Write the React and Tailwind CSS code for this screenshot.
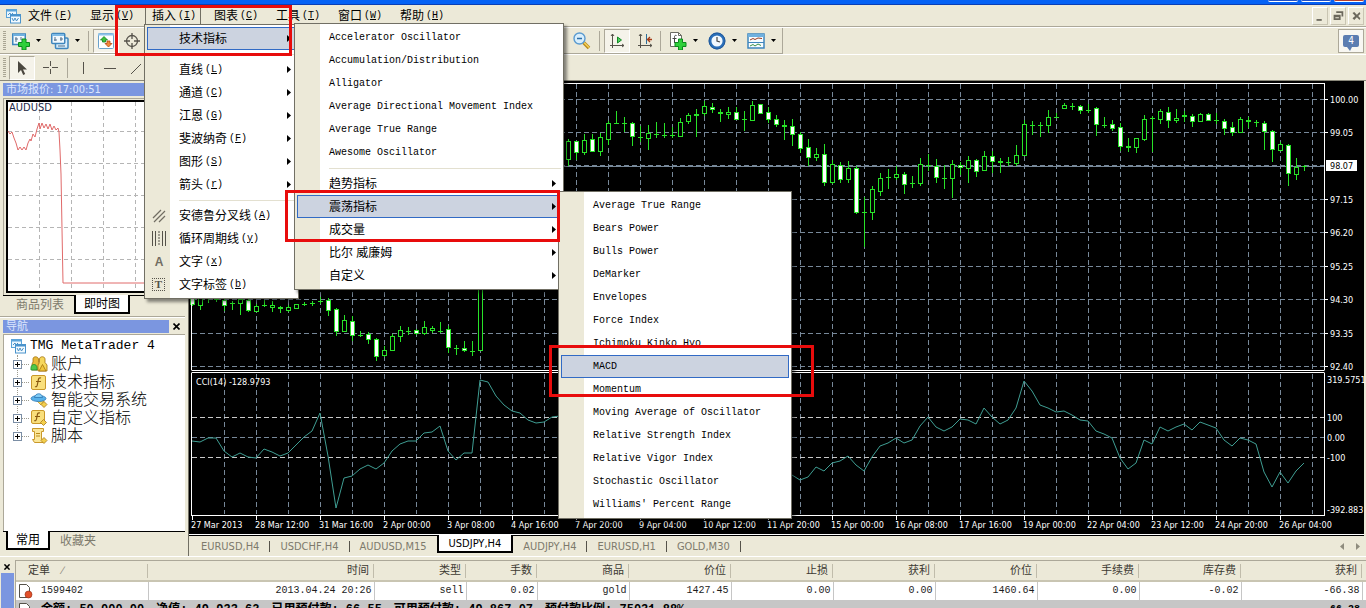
import React from "react";

const CJK = "font-['Liberation_Sans','Noto_Sans_CJK_SC',sans-serif]";
const MONO = "font-['Liberation_Mono','Noto_Sans_CJK_SC',monospace]";
const TAHOMA = "font-['DejaVu_Sans_Condensed','Noto_Sans_CJK_SC',sans-serif]";

/* ------------------------------ data ------------------------------ */

const menuBar = [
  ["文件", "F"],
  ["显示", "V"],
  ["插入", "I"],
  ["图表", "C"],
  ["工具", "T"],
  ["窗口", "W"],
  ["帮助", "H"],
];

const insertMenu = [
  { label: "技术指标", sub: true, active: true },
  null,
  { label: "直线", key: "L", sub: true },
  { label: "通道", key: "C", sub: true },
  { label: "江恩", key: "G", sub: true },
  { label: "斐波纳奇", key: "F", sub: true },
  { label: "图形", key: "S", sub: true },
  { label: "箭头", key: "r", sub: true },
  null,
  { label: "安德鲁分叉线", key: "A", icon: "fork" },
  { label: "循环周期线", key: "y", icon: "cycle" },
  { label: "文字", key: "x", icon: "text" },
  { label: "文字标签", key: "b", icon: "label" },
];

const indicatorMenu = [
  { label: "Accelerator Oscillator", latin: true },
  { label: "Accumulation/Distribution", latin: true },
  { label: "Alligator", latin: true },
  { label: "Average Directional Movement Index", latin: true },
  { label: "Average True Range", latin: true },
  { label: "Awesome Oscillator", latin: true },
  null,
  { label: "趋势指标", sub: true },
  { label: "震荡指标", sub: true, active: true },
  { label: "成交量", sub: true },
  { label: "比尔 威廉姆", sub: true },
  { label: "自定义", sub: true },
];

const oscillatorMenu = [
  "Average True Range",
  "Bears Power",
  "Bulls Power",
  "DeMarker",
  "Envelopes",
  "Force Index",
  "Ichimoku Kinko Hyo",
  "MACD",
  "Momentum",
  "Moving Average of Oscillator",
  "Relative Strength Index",
  "Relative Vigor Index",
  "Stochastic Oscillator",
  "Williams' Percent Range",
].map((label) => ({ label, latin: true, active: label === "MACD" }));

const chartTabs = ["EURUSD,H4", "USDCHF,H4", "AUDUSD,M15", "USDJPY,H4", "AUDJPY,H4", "EURUSD,H1", "GOLD,M30"];

const priceLabels = [
  ["100.00", 100],
  ["99.05", 133],
  ["97.15", 200],
  ["96.20", 233],
  ["95.25", 267],
  ["94.30", 300],
  ["93.35", 334],
  ["92.40", 367],
];

const cciLabels = [
  ["319.5751", 380],
  ["100", 418],
  ["0.00", 438],
  ["-100", 458],
  ["-392.883", 510],
];

const timeLabels = [
  "27 Mar 2013", "28 Mar 12:00", "31 Mar 16:00", "2 Apr 00:00", "3 Apr 08:00", "4 Apr 16:00",
  "7 Apr 20:00", "9 Apr 04:00", "10 Apr 12:00", "11 Apr 20:00", "15 Apr 00:00", "16 Apr 08:00",
  "17 Apr 16:00", "19 Apr 00:00", "22 Apr 04:00", "23 Apr 12:00", "24 Apr 20:00", "26 Apr 04:00",
];

// kind (h hollow, f filled, d doji), high, low, body top, body bottom - in thirds of a pixel
const leftBars = [
  ["f", 55, 80, 58, 76], ["h", 50, 93, 55, 77], ["d", 50, 72, 55], ["d", 50, 68, 60],
  ["f", 60, 96, 64, 77], ["d", 66, 94, 72], ["h", 58, 108, 61, 73], ["f", 58, 98, 63, 92],
  ["h", 74, 98, 82, 95], ["d", 62, 85, 79], ["h", 65, 98, 78, 84], ["h", 80, 103, 84, 88],
  ["h", 78, 98, 85, 92], ["h", 75, 90, 76, 86], ["d", 68, 82, 75], ["d", 66, 80, 71],
  ["d", 55, 75, 66], ["f", 56, 112, 64, 92], ["f", 88, 170, 91, 155], ["h", 108, 160, 124, 155],
  ["f", 112, 185, 125, 168], ["d", 157, 175, 167], ["f", 160, 195, 165, 181], ["f", 176, 245, 180, 230],
  ["h", 200, 235, 213, 227], ["h", 165, 216, 172, 214], ["h", 142, 190, 154, 172], ["d", 145, 168, 155],
  ["f", 150, 168, 154, 162], ["h", 126, 167, 145, 163], ["h", 140, 162, 148, 153], ["d", 130, 162, 155],
  ["f", 140, 222, 151, 205], ["d", 197, 228, 206], ["f", 186, 218, 208, 213], ["d", 186, 230, 215],
  ["h", 0, 214, 0, 214],
];

const rightBars = [
  ["h", 420, 500, 427, 479], ["f", 427, 482, 427, 458], ["h", 405, 468, 423, 458], ["f", 405, 460, 421, 455],
  ["h", 402, 470, 415, 455], ["h", 367, 438, 373, 419], ["d", 337, 376, 373], ["d", 355, 399, 373],
  ["f", 369, 440, 371, 412], ["d", 382, 430, 413], ["h", 378, 452, 402, 416], ["d", 368, 416, 405],
  ["d", 373, 416, 407], ["d", 385, 416, 407], ["h", 358, 412, 370, 412], ["h", 342, 374, 349, 367],
  ["h", 330, 413, 345, 349], ["h", 306, 350, 320, 342], ["f", 312, 342, 324, 331], ["h", 330, 368, 339, 343],
  ["h", 323, 360, 340, 345], ["f", 325, 362, 340, 359], ["d", 336, 396, 361], ["h", 306, 362, 318, 362],
  ["f", 315, 345, 315, 342], ["f", 325, 372, 340, 359], ["f", 348, 384, 361, 376], ["h", 362, 422, 377, 381],
  ["f", 361, 440, 381, 405], ["f", 400, 462, 404, 446], ["f", 420, 502, 445, 473], ["h", 447, 486, 466, 475],
  ["f", 436, 560, 465, 548], ["h", 482, 554, 495, 548], ["f", 490, 552, 497, 540], ["h", 485, 552, 507, 541],
  ["f", 502, 644, 507, 640], ["d", 595, 745, 639], ["h", 560, 662, 570, 638], ["h", 522, 590, 538, 575],
  ["d", 511, 570, 534], ["h", 500, 543, 526, 535], ["f", 520, 585, 526, 556], ["d", 532, 566, 553],
  ["h", 478, 560, 495, 551], ["d", 465, 515, 498], ["f", 480, 553, 500, 533], ["d", 498, 570, 537],
  ["h", 483, 596, 495, 538], ["f", 490, 527, 497, 504], ["h", 472, 552, 484, 506], ["f", 480, 533, 482, 515],
  ["h", 457, 515, 472, 513], ["f", 457, 522, 472, 485], ["h", 478, 522, 485, 490], ["d", 474, 500, 490],
  ["h", 437, 500, 468, 491], ["h", 362, 470, 376, 467], ["d", 365, 408, 377], ["d", 370, 414, 377],
  ["h", 333, 401, 354, 377], ["d", 342, 358, 353], ["h", 312, 330, 319, 326], ["d", 312, 332, 322],
  ["f", 318, 345, 322, 332], ["d", 315, 342, 333], ["f", 323, 410, 328, 376], ["d", 355, 387, 379],
  ["f", 363, 395, 376, 386], ["f", 373, 455, 385, 440], ["h", 417, 458, 440, 444], ["h", 417, 461, 418, 443],
  ["h", 348, 425, 361, 419], ["d", 352, 458, 358], ["h", 331, 375, 337, 359], ["f", 324, 386, 340, 362],
  ["h", 330, 372, 357, 362], ["h", 337, 368, 347, 352], ["f", 345, 383, 350, 365], ["h", 342, 368, 346, 365],
  ["f", 342, 367, 346, 362], ["d", 342, 374, 363], ["f", 360, 407, 367, 387], ["f", 370, 411, 385, 398],
  ["h", 355, 402, 361, 399], ["h", 353, 386, 362, 367], ["d", 363, 384, 369], ["f", 366, 453, 373, 395],
  ["f", 393, 488, 395, 449], ["h", 428, 456, 436, 452], ["f", 435, 560, 439, 521], ["h", 477, 542, 503, 524],
  ["d", 499, 515, 502],
];

// CCI readings, one every 8px, also in thirds of a pixel
const cciLeft = [
  487, 490, 477, 476, 515, 534, 523, 533, 537, 511, 520, 531, 522, 499, 473, 456, 402, 530, 688, 598,
  590, 571, 559, 571, 553, 516, 496, 487, 487, 463, 460, 440, 515, 543, 523, 523, 303, 308, 350, 378,
  397, 401, 424, 433, 429, 413, 412,
];
const cciRight = [
  349, 364, 354, 325, 336, 313, 306, 290, 319, 335, 293, 262, 252, 236, 253, 243, 202, 175, 205, 216,
  204, 181, 184, 195, 146, 173, 195, 183, 148, 66, 95, 139, 148, 160, 157, 169, 183, 187, 216, 224,
  237, 297, 330, 313, 243, 255, 205, 216, 205, 196, 213, 190, 198, 208, 243, 262, 238, 243, 255, 340,
  385, 338, 373, 336, 313,
];

const columns = [
  ["时间", "2013.04.24 20:26", "w-[226px]"],
  ["类型", "sell", "w-[92px]"],
  ["手数", "0.02", "w-[71px]"],
  ["商品", "gold", "w-[92px]"],
  ["价位", "1427.45", "w-[102px]"],
  ["止损", "0.00", "w-[102px]"],
  ["获利", "0.00", "w-[102px]"],
  ["价位", "1460.64", "w-[102px]"],
  ["手续费", "0.00", "w-[102px]"],
  ["库存费", "-0.02", "w-[102px]"],
  ["获利", "-66.38", "w-[121px]"],
];

/* ------------------------------ icons ------------------------------ */

const AppIcon = () => (
  <svg width="16" height="16" viewBox="0 0 16 16" fill="none" className="shrink-0">
    <rect x="1.5" y="1.5" width="10" height="8" fill="#eaf6fd" stroke="#5aa3d8" />
    <path d="M1 2.500h11" stroke="#5aa3d8" strokeWidth="2" />
    <path d="M3 7l2-2 1 2 2-2" stroke="#4a8fc4" />
    <rect x="5.5" y="6.5" width="10" height="8.500" fill="#f4fbff" stroke="#4a93cc" />
    <path d="M5 7.500h11" stroke="#4a93cc" strokeWidth="2" />
    <path d="M7 10l1.500 3 1.500-3 1.500 3 2-3" stroke="#4a8fc4" />
  </svg>
);

const NewChartIcon = () => (
  <svg width="18" height="18" viewBox="0 0 18 18" fill="none">
    <rect x="0.750" y="2" width="12.500" height="10.500" fill="#f2f9fe" stroke="#3f86bd" strokeWidth="1.500" />
    <path d="M1 3h12" stroke="#6fb0df" strokeWidth="2" />
    <path d="M4 5v5M3 7h3M9 5v3" stroke="#55718a" />
    <path d="M10 7h4v3.500h3.500v4H14V18h-4v-3.500H6.500v-4H10z" fill="#2fd03a" stroke="#0b8a1c" />
  </svg>
);

const ProfilesIcon = () => (
  <svg width="18" height="18" viewBox="0 0 18 18" fill="none">
    <rect x="4.500" y="6" width="12.500" height="10.500" rx="1" fill="#d9edfa" stroke="#3f86bd" strokeWidth="1.500" />
    <rect x="0.750" y="1.500" width="13" height="10" rx="1" fill="#f2f9fe" stroke="#3f86bd" strokeWidth="1.500" />
    <path d="M1 3h12" stroke="#7fbbe6" strokeWidth="2" />
    <path d="M4 5v4M3 8h3M10 5v4M9 7h3" stroke="#55718a" />
    <path d="M7 14h7" stroke="#55718a" />
  </svg>
);

const ArrowsIcon = () => (
  <svg width="18" height="18" viewBox="0 0 18 18" fill="none">
    <rect x="1.500" y="1.500" width="15" height="15" rx="1" fill="#fff" stroke="#6aa2cc" />
    <path d="M1 2.500h16" stroke="#8fc4ea" strokeWidth="2" />
    <path d="M7 4.500l3.500 3.500H8.500v2h-3V8H3.500z" fill="#3cc23c" stroke="#12801f" strokeWidth="0.800" />
    <path d="M11.500 15L8 11.500h2v-2.500h3v2.500h2z" fill="#f28a3c" stroke="#b64512" strokeWidth="0.800" />
  </svg>
);

const TargetIcon = () => (
  <svg width="18" height="18" viewBox="0 0 18 18" fill="none" stroke="#55524a" strokeWidth="1.300">
    <circle cx="9" cy="9" r="5.500" />
    <path d="M9 1v6M9 11v6M1 9h6M11 9h6" />
  </svg>
);

const ZoomOutIcon = () => (
  <svg width="18" height="18" viewBox="0 0 18 18" fill="none">
    <path d="M10.500 10.500l5.500 5.500" stroke="#b98a1b" strokeWidth="3.500" />
    <path d="M11 10.500l5 5" stroke="#f5d25a" strokeWidth="1.500" />
    <circle cx="6.500" cy="6.500" r="5.500" fill="#d8eefc" stroke="#5b9bd0" strokeWidth="1.400" />
    <path d="M4 6.500h5" stroke="#2d6fa8" strokeWidth="1.500" />
  </svg>
);

const AutoScrollIcon = () => (
  <svg width="16" height="16" viewBox="0 0 16 16" fill="none">
    <path d="M3.500 1v14M1 12.500h14M2 3l1.500-2L5 3M13 11l2 1.500-2 1.500" stroke="#55524a" />
    <path d="M8.500 4v6l4-3z" fill="#4fd060" stroke="#158a27" />
  </svg>
);

const ShiftIcon = () => (
  <svg width="16" height="16" viewBox="0 0 16 16" fill="none">
    <path d="M3.500 1v14M1 12.500h14M2 3l1.500-2L5 3M13 11l2 1.500-2 1.500" stroke="#55524a" />
    <path d="M9.500 1v10" stroke="#2d6f9a" />
    <path d="M15 6.500h-4M13 4l-2.500 2.500L13 9" stroke="#a53a14" strokeWidth="1.300" />
  </svg>
);

const IndicatorsIcon = () => (
  <svg width="18" height="18" viewBox="0 0 18 18" fill="none">
    <path d="M1.500 0.500h8l3 3v11h-11z" fill="#fff" stroke="#6b6b63" />
    <path d="M9.500 0.500v3h3" stroke="#6b6b63" />
    <path d="M7.500 3.500c-2-.6-2 .8-2 2V11M3.500 6.500h4" stroke="#444" />
    <path d="M9.500 7h4v3.500H17v4h-3.500V18h-4v-3.500H6v-4h3.500z" fill="#2fd03a" stroke="#0b8a1c" />
  </svg>
);

const ClockIcon = () => (
  <svg width="18" height="18" viewBox="0 0 18 18" fill="none">
    <circle cx="9" cy="9" r="7" fill="#f2f9ff" stroke="#2a6fb9" strokeWidth="2.800" />
    <circle cx="9" cy="9" r="8" stroke="#1c4f8c" strokeWidth="0.700" />
    <path d="M9 5v4l3 1" stroke="#444" strokeWidth="1.200" />
  </svg>
);

const TemplateIcon = () => (
  <svg width="18" height="16" viewBox="0 0 18 16" fill="none">
    <rect x="1" y="1" width="16" height="14" fill="#f8fcff" stroke="#3f86bd" strokeWidth="1.500" />
    <path d="M1 2.500h16" stroke="#6fb0df" strokeWidth="3" />
    <path d="M1 9.500h16" stroke="#3f86bd" />
    <path d="M3 7l3-1.500 2 1 3-1.500 4 .5" stroke="#9a3a20" />
    <path d="M3 13l3-1.500 2 1.500 3-2 3 1.500" stroke="#3a8f46" />
  </svg>
);

const CursorIcon = () => (
  <svg width="12" height="16" viewBox="0 0 12 16">
    <path d="M2 1v12l3-3 2.200 5 2-1L7 9.500h4z" fill="#4a473f" />
  </svg>
);

const CrossIcon = () => (
  <svg width="16" height="16" viewBox="0 0 16 16" stroke="#55524a">
    <path d="M7.500 1v5M7.500 9v5M0 7.500h6M9 7.500h6" />
  </svg>
);

const menuIcons = {
  fork: (
    <svg width="14" height="14" viewBox="0 0 14 14" stroke="#716d63" strokeWidth="1.200">
      <path d="M1 9L9 1M2 13L13 2M7 13l6-6" />
    </svg>
  ),
  cycle: (
    <svg width="14" height="15" viewBox="0 0 14 15" stroke="#55524a">
      <path d="M0.500 0v15M3.500 0v15M10.500 0v15M13.500 0v15" />
      <path d="M7 0v15" strokeDasharray="2 1" />
    </svg>
  ),
  text: (
    <b className="w-3.5 text-center font-['Liberation_Sans',sans-serif] text-xs text-[#716d63]">A</b>
  ),
  label: (
    <span className="flex h-[13px] w-[13px] items-center justify-center border border-dotted border-[#55524a] font-['Liberation_Serif',serif] text-[11px] font-bold leading-none text-[#55524a]">
      T
    </span>
  ),
};

const treeIcons = {
  accounts: (
    <svg width="18" height="18" viewBox="0 0 18 18" stroke="#a3720c" strokeWidth="0.800">
      <path d="M3 4c0-3 5-3 5.500 0v3.500l1.500 2V15H2V9l1-2z" fill="#e8b93a" />
      <path d="M9.500 4c0-3 5.500-3 5.500 0v3.500l2 2.500v6H8v-6l1.500-2.500z" fill="#f6d75c" />
      <path d="M9 16l3.500-6.500L16 16z" fill="#f0c53c" />
      <path d="M1 15c-.5-4 1-5.500 3-5.500S7.500 11 7 15z" fill="#4ec84a" stroke="#1d8a2c" />
    </svg>
  ),
  indicator: (
    <svg width="18" height="17" viewBox="0 0 18 17" fill="none">
      <rect x="1.500" y="1.500" width="14" height="14" rx="1.500" fill="#f9df7c" stroke="#c9982a" />
      <path d="M11 4c-2-.8-2.500.6-2.800 2.500L7.300 11c-.3 1.800-1.300 2-2.300 1.500M6 7.500h5" stroke="#8a5a10" strokeWidth="1.200" />
    </svg>
  ),
  expert: (
    <svg width="18" height="18" viewBox="0 0 18 18">
      <path d="M6 9l5 5 3-4z" fill="#f6d75c" stroke="#b98a1b" strokeWidth="0.700" />
      <ellipse cx="8.500" cy="7.500" rx="7.500" ry="3" fill="#58b2ea" stroke="#2b76b4" strokeWidth="0.800" />
      <path d="M4.500 6.500C5 2 12 1 12.500 6.500z" fill="#7fcaf4" stroke="#2b76b4" strokeWidth="0.800" />
      <path d="M14 10.500l3 3-3 3-3-3z" fill="#f3cf4c" stroke="#a8781a" strokeWidth="0.800" />
    </svg>
  ),
  custom: (
    <svg width="18" height="18" viewBox="0 0 18 18" fill="none">
      <rect x="1.500" y="1.500" width="13" height="13" rx="1.500" fill="#f9df7c" stroke="#c9982a" />
      <path d="M10 4c-2-.8-2.500.6-2.800 2.500L6.500 10c-.3 1.800-1.300 2-2.300 1.500M5 7.500h5" stroke="#8a5a10" strokeWidth="1.200" />
      <path d="M13.500 10.500l3 3-3 3-3-3z" fill="#f3cf4c" stroke="#a8781a" strokeWidth="0.800" />
    </svg>
  ),
  script: (
    <svg width="18" height="18" viewBox="0 0 18 18" fill="none">
      <path d="M2.500 1.500h11v3h-2v8h2v3h-9l-2-3h2v-8h-2z" fill="#fbe79a" stroke="#c9982a" />
      <path d="M6 6.500h4M6 9h4" stroke="#b98a1b" />
      <path d="M14 10.500l3 3-3 3-3-3z" fill="#f3cf4c" stroke="#a8781a" strokeWidth="0.800" />
    </svg>
  ),
};

const tree = [
  ["账户", "accounts"],
  ["技术指标", "indicator"],
  ["智能交易系统", "expert"],
  ["自定义指标", "custom"],
  ["脚本", "script"],
];

const OrderIcon = () => (
  <svg width="15" height="16" viewBox="0 0 15 16">
    <path d="M1.500 1.500h7l3 3v10h-10z" fill="#fff" stroke="#55524a" />
    <circle cx="10.500" cy="11.500" r="3.500" fill="#e2502a" stroke="#8f2a12" strokeWidth="0.600" />
  </svg>
);

/* ------------------------------ pieces ------------------------------ */

const Mnemonic = ({ char }) => (
  <span className={`${MONO} ml-0.5 text-[10px]`}>
    (<u>{char}</u>)
  </span>
);

const Grip = () => (
  <span className="h-5 w-[3px] bg-[repeating-linear-gradient(to_bottom,#a9a593_0_1px,transparent_1px_2px)]" />
);

const Tool = ({ label, pressed, children }) => (
  <button
    aria-label={label}
    className={`flex h-6 items-center justify-center ${
      pressed ? "w-[26px] border border-[#aca899] border-r-white border-b-white bg-[#f5f3ea]" : "w-[18px]"
    }`}
  >
    {children}
  </button>
);

const DropTool = ({ label, children }) => (
  <div className="flex items-center gap-1.5">
    <Tool label={label}>{children}</Tool>
    <button aria-label={`${label}选项`} className="w-[5px]">
      <svg width="5" height="3" viewBox="0 0 5 3" className="block">
        <path d="M0 0h5L2.500 3z" />
      </svg>
    </button>
  </div>
);

const Separator = () => <span className="h-5 w-px bg-[#aca899]" />;

const Menu = ({ items, label, className }) => (
  <ul
    role="menu"
    aria-label={label}
    className={`absolute border border-[#716f64] bg-[linear-gradient(to_right,#ece9d8_25px,#fff_25px)] p-0.5 shadow-[3px_3px_3px_rgba(0,0,0,0.45)] ${className}`}
  >
    {items.map((item, i) =>
      item === null ? (
        <li key={i} role="separator" className="flex h-2 items-center pl-8">
          <span className="h-px flex-1 bg-[#e3e0d0]" />
        </li>
      ) : (
        <li key={i} role="none">
          <button
            role="menuitem"
            className={`flex h-[23px] w-full items-center border pr-1 text-left ${
              item.active ? "border-[#316ac5] bg-[#ccd3e0]" : "border-transparent"
            }`}
          >
            <span className="flex w-[31px] shrink-0 items-center pl-1">
              {item.icon && menuIcons[item.icon]}
            </span>
            <span
              className={`flex flex-1 items-center whitespace-nowrap leading-none ${
                item.latin ? `${MONO} text-[10px]` : `${CJK} text-xs`
              }`}
            >
              {item.label}
              {item.key && <Mnemonic char={item.key} />}
            </span>
            {item.sub && (
              <svg width="4" height="7" viewBox="0 0 4 7">
                <path d="M0 0l4 3.500L0 7z" />
              </svg>
            )}
          </button>
        </li>
      )
    )}
  </ul>
);

const PanelTitle = ({ children }) => (
  <div className="flex h-[13px] items-center gap-1 pl-[3px]">
    <h2
      className={`${TAHOMA} h-full flex-1 overflow-hidden bg-[#7b96e0] pl-[3px] text-[11px] leading-[13px] text-[#dbe6fd]`}
    >
      {children}
    </h2>
    <button aria-label="关闭" className="w-3">
      <svg width="7" height="7" viewBox="0 0 7 7" stroke="#000" strokeWidth="1.600">
        <path d="M0.500 0.500l6 6M6.500 0.500l-6 6" />
      </svg>
    </button>
  </div>
);

const PanelTabs = ({ tabs, active }) => (
  <div className={`${CJK} flex h-[19px] border-t border-black px-[3px] text-xs leading-none`}>
    {tabs.map((tab) => (
      <button
        key={tab}
        className={
          tab === active
            ? "-mt-px border-2 border-t-0 border-black bg-white px-2"
            : "px-2.5 text-[#7d7a6c]"
        }
      >
        {tab}
      </button>
    ))}
  </div>
);

const TickChart = () => (
  <svg viewBox="6 100 178 193" className="block w-full">
    <rect x="7" y="101" width="176" height="191" fill="#fff" stroke="#000" strokeWidth="2" />
    <path
      d="M39.500 102V291M71.500 102V291M103.500 102V291M135.500 102V291M167.500 102V291M8 131.500H182M8 163.500H182M8 195.500H182M8 227.500H182M8 259.500H182"
      stroke="#b5b5b5"
      strokeDasharray="4 3"
    />
    <polyline
      points="8,131 10,134 12,132 14,138 16,143 18,150 20,147 22,150 24,147 26,150 28,143 30,139 31,141 33,134 35,137 37,129 39,123 40,129 42,123 44,128 46,124 48,129 50,124 52,130 54,126 56,130 58,128 59,132 60,150 61,174 62,229 63,283 182,283"
      fill="none"
      stroke="#e06a6a"
    />
    <text x="9" y="111" className={`${TAHOMA} text-[11px]`} fill="#1d2a48">
      AUDUSD
    </text>
  </svg>
);

const Candles = ({ bars, x, y }) =>
  bars.map(([kind, high, low, top, bottom], i) => {
    const cx = x + i * 8;
    const at = (v) => y + Math.round(v / 3);
    if (kind === "d") {
      return (
        <path
          key={i}
          d={`M${cx + 0.5} ${at(high)}V${at(low)}M${cx - 2} ${at(top) + 0.5}h5`}
          stroke="#28e228"
        />
      );
    }
    const h = Math.max(at(bottom) - at(top), 1);
    return (
      <g key={i} stroke="#28e228">
        <path d={`M${cx + 0.5} ${at(high)}V${at(low)}`} />
        <rect x={cx - 1.5} y={at(top) + 0.5} width="4" height={h} fill={kind === "f" ? "#fff" : "#000"} />
      </g>
    );
  });

const PriceChart = () => {
  const cols = Array.from({ length: 35 }, (_, i) => 224 + i * 32);
  const rows = [100, 133, 166, 200, 233, 267, 300, 334, 367];
  const line = (values, x, y) => values.map((v, i) => `${x + i * 8},${y + Math.round(v / 3)}`).join(" ");

  return (
    <svg viewBox="189 82 1175 453" className={`${TAHOMA} block w-full overflow-visible bg-black text-[9px]`}>
      <g stroke="#778899" strokeDasharray="5 3">
        {cols.map((x) => (
          <path key={x} d={`M${x + 0.5} 85V371M${x + 0.5} 375V515`} />
        ))}
        {rows.map((y) => (
          <path key={y} d={`M192 ${y + 0.5}H1324`} />
        ))}
        <path d="M192 438.500H1324" />
        <path d="M192 418.500H1324M192 458.500H1324" stroke="#c8c8c8" />
      </g>
      <path d="M192 167.500H1324" stroke="#778899" />

      <Candles bars={leftBars} x={192} y={280} />
      <Candles bars={rightBars} x={568} y={0} />

      <g fill="none" stroke="#3f9e93">
        <polyline points={line(cciLeft, 192, 280)} />
        <polyline points={line(cciRight, 792, 360)} />
      </g>

      <path d="M191.500 84.500H1324.500M191.500 371.500H1324.500M191.500 373.500H1324.500M191.500 516.500H1324.500" stroke="#fff" />
      <path d="M191.500 84V371M191.500 374V517M1324.500 84V371M1324.500 374V517" stroke="#fff" />

      <g fill="#fff">
        {priceLabels.map(([text, y]) => (
          <g key={text}>
            <rect x="1325" y={y} width="3" height="1" />
            <text x="1330" y={y + 4}>{text}</text>
          </g>
        ))}
        {cciLabels.map(([text, y]) => (
          <text key={text} x="1327" y={y + 4}>{text}</text>
        ))}
        {timeLabels.map((text, i) => (
          <g key={text}>
            <rect x={192 + i * 64} y="517" width="1" height="4" />
            <text x={191 + i * 64} y="529">{text}</text>
          </g>
        ))}
        <text x="196" y="386">CCI(14) -128.9793</text>
        <rect x="1326" y="161" width="31" height="11" />
      </g>
      <text x="1330" y="170" fill="#000">
        98.07
      </text>
    </svg>
  );
};

const Callout = ({ className }) => (
  <div className={`pointer-events-none absolute border-3 border-[#e80c0c] ${className}`} />
);

/* ------------------------------ page ------------------------------ */

export default function App() {
  return (
    <div className={`${CJK} relative flex h-screen flex-col overflow-hidden bg-[#ece9d8] text-black`}>
      <div className="flex h-[5px] shrink-0 items-start justify-end gap-[3px] border-b border-[#0a3fb5] bg-[#0562f5] pr-0.5">
        <span className="h-0.5 w-[30px] rounded-b border-b border-white bg-[#1f50c8]" />
        <span className="h-0.5 w-[30px] rounded-b border-b border-white bg-[#1f50c8]" />
        <span className="h-0.5 w-[30px] rounded-b border-b border-white bg-[#b8402a]" />
      </div>

      <nav className="flex h-[22px] shrink-0 items-center border-b border-[#aca899] pl-[5px]">
        <AppIcon />
        <div className="flex h-full flex-1 gap-1.5">
          {menuBar.map(([text, key]) => (
            <button
              key={text}
              className={`flex h-5 w-14 items-center border-x border-t pl-1.5 text-xs leading-none ${
                text === "插入" ? "border-[#716f64]" : "border-transparent"
              }`}
            >
              {text}
              <Mnemonic char={key} />
            </button>
          ))}
        </div>
        <div className="flex gap-0.5 pr-0.5">
          {["M4 12h6v2H4z", "M6 3h8v6h-2V5H6zM3 7h8v6H3zM5 10v1h4v-1z", "M4 5l2-1 3 3 3-3 1 2-2.500 2.500L13 11l-1 2-3-3-3 3-2-2 3-2.500z"].map(
            (d, i) => (
              <button
                key={d}
                aria-label={["最小化", "还原", "关闭"][i]}
                className="h-[18px] w-4 border border-white border-r-[#c9c5b2] border-b-[#c9c5b2]"
              >
                <svg width="14" height="16" viewBox="0 0 16 17" fill="#6b685c" fillRule="evenodd">
                  <path d={d} />
                </svg>
              </button>
            )
          )}
        </div>
      </nav>

      <div className="flex h-[27px] shrink-0 items-center justify-between border-t border-white pr-0.5">
        <div className="flex h-full w-[783px] items-center border-r border-b border-[#aca899] pl-[3px]">
          <Grip />
          <div className="flex items-center gap-2.5 pl-1.5">
            <DropTool label="新图表"><NewChartIcon /></DropTool>
            <DropTool label="配置文件"><ProfilesIcon /></DropTool>
          </div>
          <div className="flex items-center gap-1 pl-2">
            <Separator />
            <Tool label="市场报价" pressed><ArrowsIcon /></Tool>
            <Tool label="数据窗口"><TargetIcon /></Tool>
          </div>
          <div className="ml-auto flex items-center gap-1">
            <Tool label="缩小"><ZoomOutIcon /></Tool>
            <span className="w-0" />
            <Separator />
            <Tool label="自动滚动" pressed><AutoScrollIcon /></Tool>
          </div>
          <div className="flex items-center gap-1.5 pl-1.5">
            <Tool label="图表平移"><ShiftIcon /></Tool>
            <Separator />
          </div>
          <div className="flex items-center gap-2.5 pr-1.5 pl-2">
            <DropTool label="技术指标"><IndicatorsIcon /></DropTool>
            <DropTool label="周期"><ClockIcon /></DropTool>
            <DropTool label="模板"><TemplateIcon /></DropTool>
          </div>
        </div>
        <button aria-label="4 条消息" className="flex h-6 w-[26px] items-center justify-center border border-[#aca899] bg-[#f8f7f2]">
          <span className={`${TAHOMA} relative flex h-3 w-4 items-center justify-center rounded-xs bg-[#5b7db1] text-[10px] leading-none text-white`}>
            4
            <svg width="5" height="4" viewBox="0 0 5 4" className="absolute top-full left-1">
              <path d="M0 0h5L3 4z" fill="#5b7db1" />
            </svg>
          </span>
        </button>
      </div>

      <div className="flex h-[26px] shrink-0 items-center border-t border-white pl-[3px]">
        <Grip />
        <div className="flex items-center gap-[7px] pl-[3px]">
          <Tool label="光标" pressed><CursorIcon /></Tool>
          <Tool label="十字准线"><CrossIcon /></Tool>
          <Separator />
          <Tool label="垂直线">
            <svg width="16" height="16" stroke="#55524a"><path d="M7.500 2v12" /></svg>
          </Tool>
          <Tool label="水平线">
            <svg width="16" height="16" stroke="#55524a"><path d="M3 8.500h12" /></svg>
          </Tool>
          <Tool label="趋势线">
            <svg width="16" height="16" stroke="#55524a"><path d="M5 14L15 4" /></svg>
          </Tool>
        </div>
      </div>

      <main className="flex shrink-0 border-t border-[#8a887a]">
        <aside className="flex w-47 shrink-0 flex-col pr-[3px]">
          <section className="border-b border-[#aca899] pt-0.5 pb-0.5">
            <PanelTitle>市场报价: 17:00:51</PanelTitle>
            <div className="mt-0.5 ml-[3px] border-t border-l border-[#aca899] pt-px pr-px pb-0.5 pl-0.5">
              <TickChart />
            </div>
            <div className="pl-[3px]">
              <PanelTabs tabs={["商品列表", "即时图"]} active="即时图" />
            </div>
          </section>
          <section className="flex flex-1 flex-col border-t border-white pt-0.5 pb-1.5">
            <PanelTitle>导航</PanelTitle>
            <div className="mt-px ml-[3px] flex-1 border-t border-l border-[#aca899] bg-white pt-0.5">
              <div className={`${MONO} flex h-[18px] items-center gap-1 pl-1.5 text-[13px]`}>
                <AppIcon />
                TMG MetaTrader 4
              </div>
              <ul className="relative pl-[9px]">
                <span className="absolute top-0 bottom-2 left-[13px] border-l border-dotted border-[#9c9a8e]" />
                {tree.map(([name, icon]) => (
                  <li key={name} className="relative flex h-[18px] items-center text-base leading-none">
                    <button
                      aria-label={`展开${name}`}
                      className="h-[9px] w-[9px] border border-[#7b8ea5] bg-white"
                    >
                      <svg width="7" height="7" stroke="#000" className="block">
                        <path d="M1 3.500h5M3.500 1v5" />
                      </svg>
                    </button>
                    <span className="mr-px w-[7px] border-t border-dotted border-[#9c9a8e]" />
                    {treeIcons[icon]}
                    <span className="ml-[3px] font-light">{name}</span>
                  </li>
                ))}
              </ul>
            </div>
            <div className="pl-[3px]">
              <PanelTabs tabs={["常用", "收藏夹"]} active="常用" />
            </div>
          </section>
        </aside>

        <div className="flex min-w-0 flex-1 flex-col border-l border-[#716f64] pr-0.5">
          <PriceChart />
          <div className={`${TAHOMA} flex h-[22px] items-center justify-between border-t border-white text-[11px] text-[#7d7a6c]`}>
            <div className="flex h-full flex-1 items-center border-t border-black pl-0.5">
              {chartTabs.map((tab) =>
                tab === "USDJPY,H4" ? (
                  <button key={tab} className="-mt-1 h-[18px] border-2 border-t-0 border-black bg-white px-2.5 leading-none text-black">
                    {tab}
                  </button>
                ) : (
                  <span key={tab} className="flex items-center">
                    <button className="px-2.5 leading-none">{tab}</button>
                    {tab !== "AUDUSD,M15" && <span className="h-[11px] w-px bg-[#55524a]" />}
                  </span>
                )
              )}
            </div>
            <div className="flex h-full items-center gap-3 border-t border-black pr-1">
              <button aria-label="向左滚动">
                <svg width="4" height="7" fill="#8f8c7e" className="block"><path d="M4 0L0 3.500 4 7z" /></svg>
              </button>
              <button aria-label="向右滚动">
                <svg width="4" height="7" fill="#8f8c7e" className="block"><path d="M0 0l4 3.500L0 7z" /></svg>
              </button>
            </div>
          </div>
        </div>
      </main>

      <section className="flex shrink-0 border-t border-white pt-[3px]">
        <div className="flex w-[15px] shrink-0 flex-col pr-px">
          <button aria-label="关闭终端" className="flex h-[13px] items-center justify-center">
            <svg width="6" height="6" viewBox="0 0 7 7" stroke="#000" strokeWidth="1.800">
              <path d="M0.500 0.500l6 6M6.500 0.500l-6 6" />
            </svg>
          </button>
          <span className="ml-px flex-1 bg-[#7b96e0]" />
        </div>
        <div className="min-w-0 flex-1 border-t border-l border-[#aca899]">
          <table className={`${MONO} w-full table-fixed border-collapse text-[10px] leading-none`}>
            <colgroup>
              <col className="w-[132px]" />
              {columns.map(([, , width], i) => (
                <col key={i} className={width} />
              ))}
              <col />
            </colgroup>
            <thead className={`${CJK} text-[11px] text-[#3c3a32]`}>
              <tr className="h-5 border-b-2 border-[#c9c5b2]">
                <th className="pl-3 text-left font-normal">
                  <span className="flex items-center justify-between">
                    <span>定单<span className="ml-3 text-[#8f8c7e]">∕</span></span>
                    <span className="h-3.5 w-px bg-[#c0bcab]" />
                  </span>
                </th>
                {columns.map(([name], i) => (
                  <th key={i} className="font-normal">
                    <span className="flex items-center justify-end gap-1">
                      {name}
                      <span className="h-3.5 w-px bg-[#c0bcab]" />
                    </span>
                  </th>
                ))}
                <th />
              </tr>
            </thead>
            <tbody>
              <tr className="h-[19px] bg-white text-[#1d1d1d]">
                <td className="border-r border-[#c6c6c6]">
                  <span className="flex items-center gap-2 pl-0.5">
                    <OrderIcon />
                    1599402
                  </span>
                </td>
                {columns.map(([, value], i) => (
                  <td key={i} className="border-r border-[#c6c6c6] pr-0.5 text-right">
                    {value}
                  </td>
                ))}
                <td />
              </tr>
              <tr className="h-5 bg-[#c6c6c6] text-xs font-bold whitespace-pre">
                <td colSpan={11}>
                  <span className="flex items-center gap-3 pl-0.5">
                    <span className="flex items-center gap-2">
                      <OrderIcon />
                      余额: 50 000.00
                    </span>
                    <span>净值: 49 933.62</span>
                    <span>已用预付款: 66.55</span>
                    <span>可用预付款: 49 867.07</span>
                    <span>预付款比例: 75031.88%</span>
                  </span>
                </td>
                <td className="pr-0.5 text-right text-[10px]">-66.38</td>
                <td />
              </tr>
            </tbody>
          </table>
        </div>
      </section>

      <Menu label="插入" items={insertMenu} className="top-6 left-36 w-[155px]" />
      <Menu label="技术指标" items={indicatorMenu} className="top-[23px] left-[294px] w-[270px]" />
      <Menu label="震荡指标" items={oscillatorMenu} className="top-[191px] left-[558px] w-[234px]" />

      <Callout className="top-[5px] left-[115px] h-[51px] w-[177px]" />
      <Callout className="top-[190px] left-[285px] h-[52px] w-[275px]" />
      <Callout className="top-[345px] left-[549px] h-[52px] w-[265px]" />
    </div>
  );
}
